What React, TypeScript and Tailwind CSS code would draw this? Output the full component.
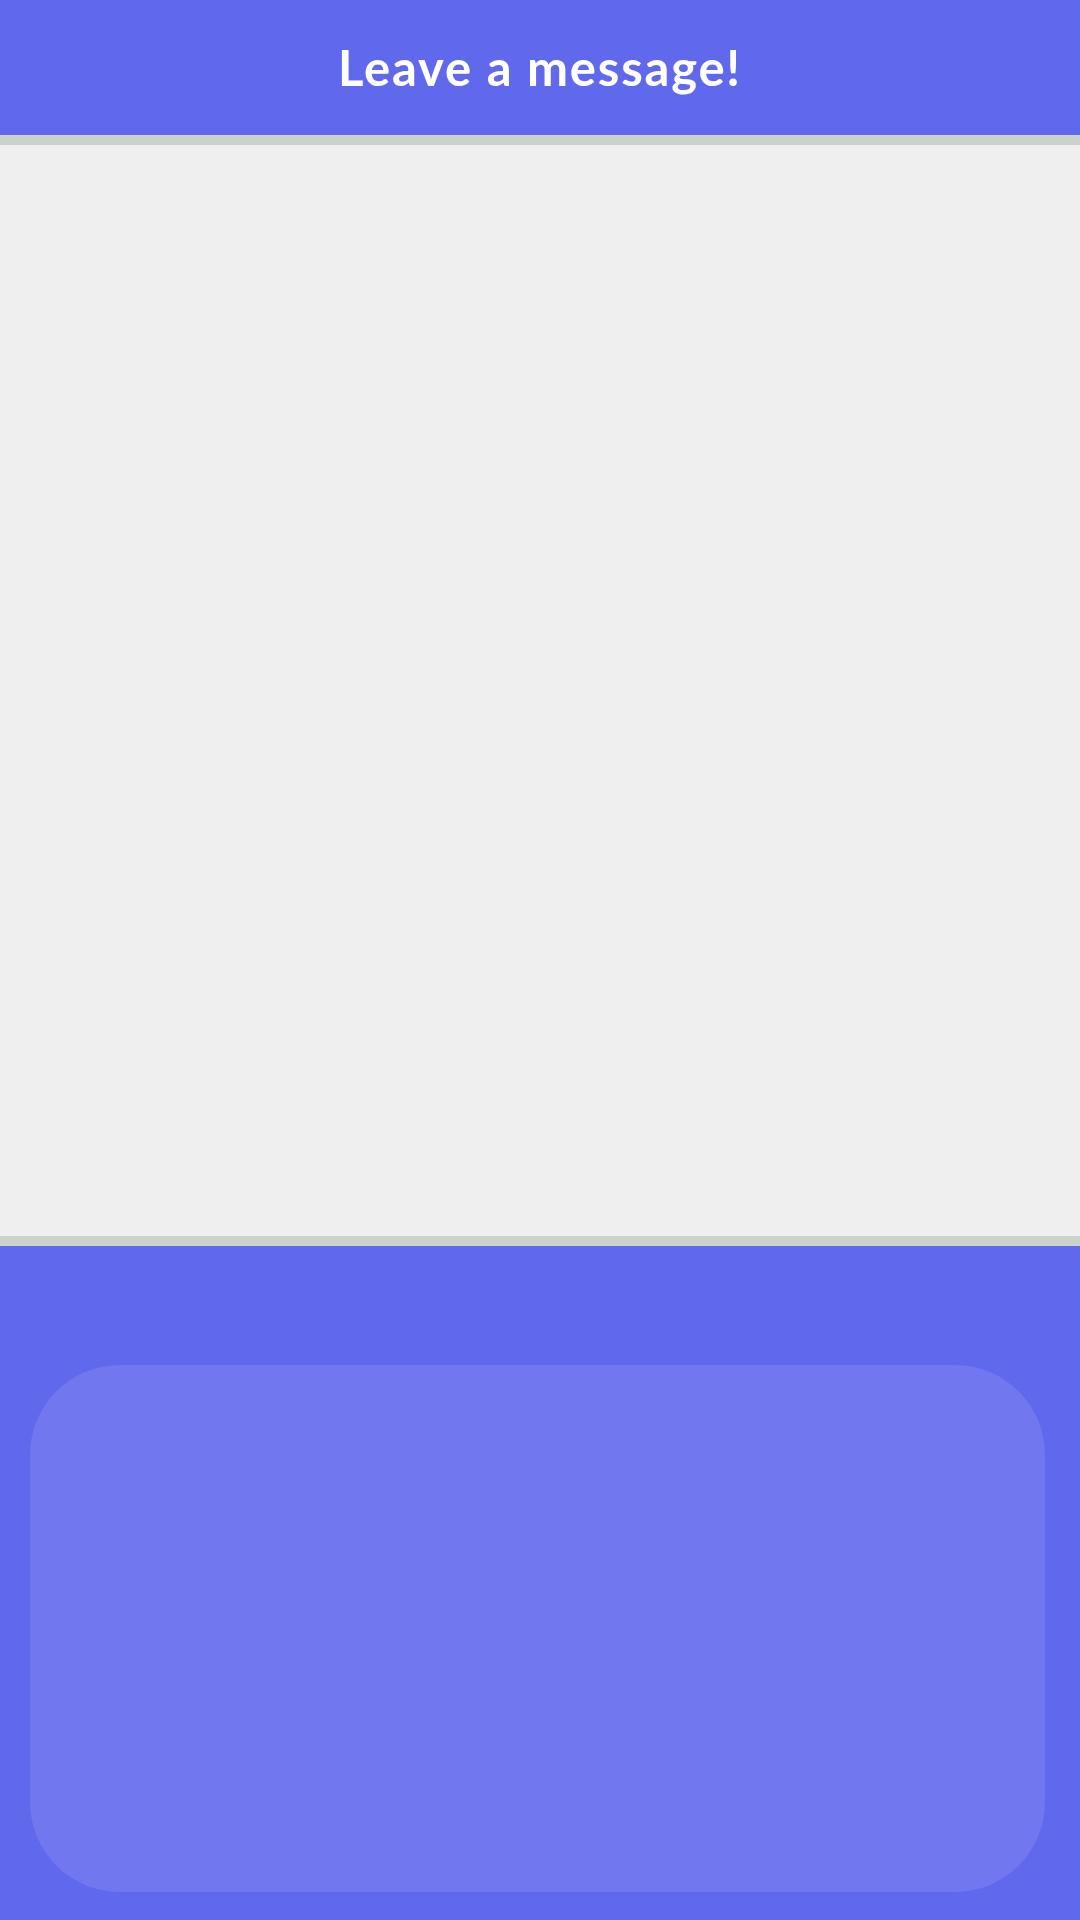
import React from 'react';

const App: React.FC = () => {
  return (
    <div className="flex h-[1920px] w-[1080px] flex-col bg-[#6069ec] font-['Lato',sans-serif]">
      <header className="flex h-[135px] shrink-0 items-center justify-center">
        <h1 className="text-[49px] font-bold leading-none tracking-[1.8px] text-white">Leave a message!</h1>
      </header>
      <div className="h-[10px] shrink-0 bg-[#ccd1c9]" />
      <main className="h-[1091px] shrink-0 bg-[#efefef]" />
      <div className="h-[10px] shrink-0 bg-[#ccd1c9]" />
      <section className="flex flex-1 flex-col pl-[30px] pr-[35px] pt-[119px] pb-[28px]">
        <div className="flex-1 rounded-[90px] bg-[#7177ee]" />
      </section>
    </div>
  );
};

export default App;
